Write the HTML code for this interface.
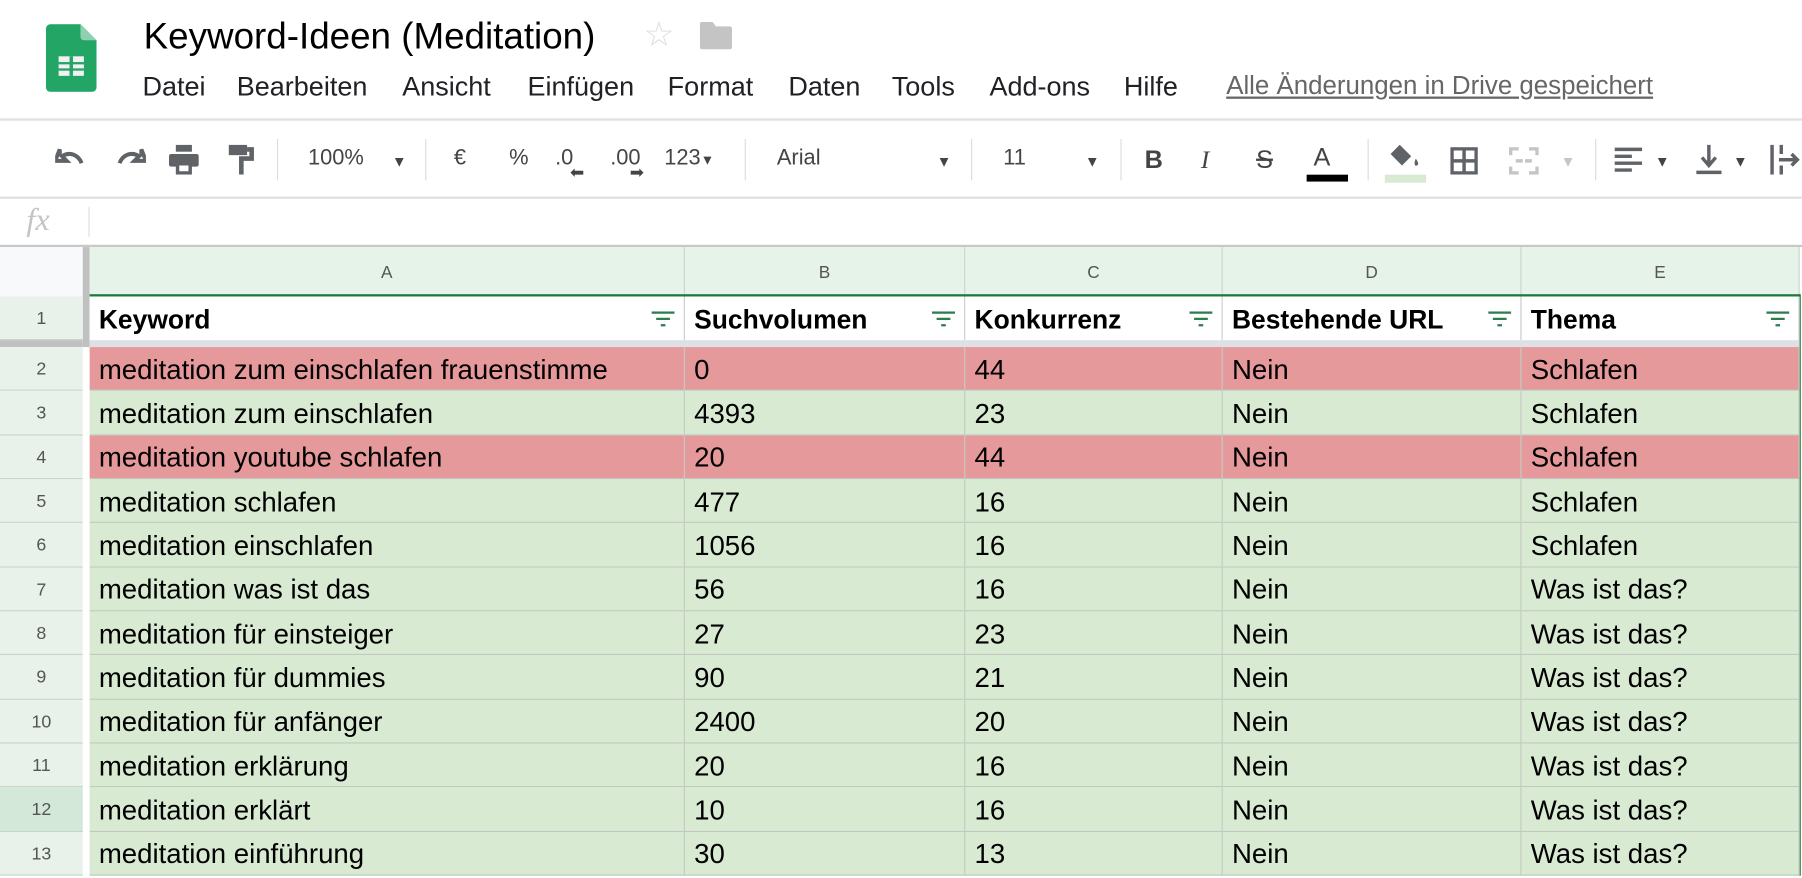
<!DOCTYPE html>
<html><head><meta charset="utf-8">
<style>
html,body{margin:0;padding:0;background:#fff;}
body{width:1802px;height:876px;overflow:hidden;position:relative;font-family:"Liberation Sans",Arial,sans-serif;}
#w{position:absolute;left:0;top:0;width:1568px;height:762px;transform:scale(1.1492);transform-origin:0 0;}
.a{position:absolute;white-space:nowrap;}
.menu{top:62px;font-size:23.5px;color:#202124;}
.tb{top:127px;font-size:19px;color:#444;}
.sep{position:absolute;top:121px;width:1px;height:36px;background:#dadce0;}
.ch{position:absolute;top:215px;height:42px;background:#e6f3e9;border-right:1px solid #c6d4ca;font-size:15px;color:#555;text-align:center;line-height:45px;box-sizing:border-box;}
.rn{position:absolute;left:0;width:72px;font-size:15.5px;color:#555;text-align:center;background:#e8f1ea;border-bottom:1px solid #c6d4ca;box-sizing:border-box;}
.row{position:absolute;left:78px;width:1488px;box-sizing:border-box;border-bottom:1px solid #bfc9c0;}
.c{position:absolute;top:0;height:100%;box-sizing:border-box;border-right:1px solid #c4cbc4;font-size:24px;color:#000;padding-left:8px;padding-top:4px;display:flex;align-items:center;}
.g{background:#d9ead3;}
.r{background:#e6999b;}
.h .c{font-weight:bold;background:#fff;font-size:23px;padding-top:3px;}
.f{position:absolute;right:8px;top:13px;}
</style></head><body><div id="w">
<svg class="a" style="left:40px;top:21px" width="44" height="59" viewBox="0 0 44 59"><path d="M4 0H30L44 14V55a4 4 0 0 1-4 4H4a4 4 0 0 1-4-4V4a4 4 0 0 1 4-4z" fill="#23a566"/><path d="M30 0L44 14H33a3 3 0 0 1-3-3z" fill="#8ed1b1"/><rect x="11" y="28" width="22" height="17" fill="#f1f1f1"/><g fill="#23a566"><rect x="20.5" y="28" width="3" height="17"/><rect x="11" y="33" width="22" height="2"/><rect x="11" y="38.5" width="22" height="2"/></g></svg>
<div class="a" style="left:125px;top:13px;font-size:32px;color:#000">Keyword-Ideen (Meditation)</div>
<div class="a" style="left:560px;top:13px;font-size:30px;color:#ddd">☆</div>
<svg class="a" style="left:609px;top:19px" width="28" height="24" viewBox="0 0 28 24"><path d="M2 0h9l3 4h12a2 2 0 0 1 2 2v16a2 2 0 0 1-2 2H2a2 2 0 0 1-2-2V2a2 2 0 0 1 2-2z" fill="#c4c4c4"/></svg>
<div class="a menu" style="left:124px">Datei</div>
<div class="a menu" style="left:206px">Bearbeiten</div>
<div class="a menu" style="left:350px">Ansicht</div>
<div class="a menu" style="left:459px">Einfügen</div>
<div class="a menu" style="left:581px">Format</div>
<div class="a menu" style="left:686px">Daten</div>
<div class="a menu" style="left:776px">Tools</div>
<div class="a menu" style="left:861px">Add-ons</div>
<div class="a menu" style="left:978px">Hilfe</div>
<div class="a menu" style="left:1067px;color:#666;text-decoration:underline;font-size:22.5px">Alle Änderungen in Drive gespeichert</div>
<div class="a" style="left:0;top:103px;width:1568px;height:2px;background:#e0e0e0"></div>
<svg class="a" style="left:48px;top:128px" width="30" height="22" viewBox="0 0 30 22"><path d="M4 8v-6l-4 10h10l-4-4c6-4 14-2 17 6" fill="none" stroke="#5f6368" stroke-width="3.5"/></svg>
<svg class="a" style="left:97px;top:128px" width="30" height="22" viewBox="0 0 30 22"><path d="M26 8v-6l4 10h-10l4-4c-6-4-14-2-17 6" fill="none" stroke="#5f6368" stroke-width="3.5"/></svg>
<svg class="a" style="left:147px;top:126px" width="26" height="26" viewBox="0 0 26 26"><rect x="6" y="0" width="14" height="6" fill="#5f6368"/><rect x="0" y="8" width="26" height="11" rx="2" fill="#5f6368"/><rect x="6" y="15" width="14" height="11" fill="#5f6368"/><rect x="9" y="18" width="8" height="5" fill="#fff"/></svg>
<svg class="a" style="left:199px;top:126px" width="22" height="26" viewBox="0 0 22 26"><rect x="0" y="0" width="16" height="9" fill="#5f6368"/><path d="M16 4h4v8h-9v14" fill="none" stroke="#5f6368" stroke-width="4"/></svg>
<div class="sep" style="left:241px"></div>
<div class="a tb" style="left:268px">100%</div>
<div class="a tb" style="left:341px;font-size:13px;top:133px">▼</div>
<div class="sep" style="left:370px"></div>
<div class="a tb" style="left:395px">€</div>
<div class="a tb" style="left:443px">%</div>
<div class="a tb" style="left:483px">.0</div>
<div class="a tb" style="left:496px;top:141px;font-size:15px">⬅</div>
<div class="a tb" style="left:531px">.00</div>
<div class="a tb" style="left:548px;top:141px;font-size:15px">➡</div>
<div class="a tb" style="left:578px">123<span style="font-size:12px">▼</span></div>
<div class="sep" style="left:648px"></div>
<div class="a tb" style="left:676px">Arial</div>
<div class="a tb" style="left:815px;font-size:13px;top:133px">▼</div>
<div class="sep" style="left:845px"></div>
<div class="a tb" style="left:873px">11</div>
<div class="a tb" style="left:944px;font-size:13px;top:133px">▼</div>
<div class="sep" style="left:975px"></div>
<div class="a tb" style="left:996px;font-weight:bold;font-size:22px;top:126px">B</div>
<div class="a tb" style="left:1045px;font-style:italic;font-size:22px;top:126px;font-family:'Liberation Serif',serif">I</div>
<div class="a tb" style="left:1093px;text-decoration:line-through;font-size:22px;top:126px">S</div>
<div class="a tb" style="left:1143px;font-size:22px;top:124px">A</div>
<div class="a" style="left:1137px;top:152px;width:36px;height:6px;background:#000"></div>
<div class="sep" style="left:1190px"></div>
<svg class="a" style="left:1208px;top:126px" width="28" height="22" viewBox="0 0 28 22"><path d="M10 0l10 10-8 8-10-10z" fill="#5f6368"/><path d="M24 12c2 3 3 5 1 6s-3-2-1-6z" fill="#5f6368"/></svg>
<div class="a" style="left:1205px;top:152px;width:36px;height:7px;background:#d9ead3"></div>
<svg class="a" style="left:1262px;top:128px" width="24" height="24" viewBox="0 0 24 24"><path d="M1.5 1.5h21v21h-21zM12 1.5v21M1.5 12h21" fill="none" stroke="#5f6368" stroke-width="3"/></svg>
<svg class="a" style="left:1313px;top:128px" width="26" height="24" viewBox="0 0 26 24"><path d="M1.5 7V1.5h7M17.5 1.5h7V7M24.5 17v5.5h-7M8.5 22.5h-7V17M6 12h6M14 12h6" fill="none" stroke="#c5c5c5" stroke-width="3"/></svg>
<div class="a tb" style="left:1358px;font-size:13px;top:133px;color:#c5c5c5">▼</div>
<div class="sep" style="left:1388px"></div>
<svg class="a" style="left:1405px;top:128px" width="24" height="22" viewBox="0 0 24 22"><path d="M0 2h24M0 8h15M0 14h24M0 20h15" stroke="#5f6368" stroke-width="3"/></svg>
<div class="a tb" style="left:1440px;font-size:13px;top:133px">▼</div>
<svg class="a" style="left:1476px;top:126px" width="22" height="26" viewBox="0 0 22 26"><path d="M11 0v16M5 11l6 7 6-7M0 24h22" fill="none" stroke="#5f6368" stroke-width="3"/></svg>
<div class="a tb" style="left:1508px;font-size:13px;top:133px">▼</div>
<svg class="a" style="left:1540px;top:126px" width="28" height="26" viewBox="0 0 28 26"><path d="M2 0v26M8 13h16M19 8l5 5-5 5M10 0v8M10 18v8" fill="none" stroke="#5f6368" stroke-width="3"/></svg>
<div class="a" style="left:0;top:171px;width:1568px;height:2px;background:#e0e0e0"></div>
<div class="a" style="left:23px;top:176px;font-size:28px;font-style:italic;color:#c4c4c4;font-family:'Liberation Serif',serif">fx</div>
<div class="a" style="left:77px;top:180px;width:1px;height:26px;background:#ddd"></div>
<div class="a" style="left:0;top:213px;width:1568px;height:2px;background:#c8c8c8"></div>
<div class="a" style="left:0;top:215px;width:72px;height:43px;background:#f8f9fa"></div>
<div class="a" style="left:72px;top:215px;width:6px;height:87px;background:#c0c0c0"></div>
<div class="ch" style="left:78px;width:518px">A</div>
<div class="ch" style="left:596px;width:244px">B</div>
<div class="ch" style="left:840px;width:224px">C</div>
<div class="ch" style="left:1064px;width:260px">D</div>
<div class="ch" style="left:1324px;width:242px">E</div>
<div class="a" style="left:78px;top:256px;width:1488px;height:2px;background:#1e7a3c"></div>
<div class="a" style="left:1565px;top:256px;width:2px;height:506px;background:#1e7a3c"></div>
<div class="rn" style="top:258px;height:38px;line-height:40px">1</div>
<div class="row h" style="top:258px;height:38px;border-bottom:none">
<div class="c" style="left:0;width:518px">Keyword<svg class="f" width="20" height="14" viewBox="0 0 20 14"><path d="M0 1h20M4 6.5h12M8 12h4" stroke="#2e7d4f" stroke-width="2"/></svg></div>
<div class="c" style="left:518px;width:244px">Suchvolumen<svg class="f" width="20" height="14" viewBox="0 0 20 14"><path d="M0 1h20M4 6.5h12M8 12h4" stroke="#2e7d4f" stroke-width="2"/></svg></div>
<div class="c" style="left:762px;width:224px">Konkurrenz<svg class="f" width="20" height="14" viewBox="0 0 20 14"><path d="M0 1h20M4 6.5h12M8 12h4" stroke="#2e7d4f" stroke-width="2"/></svg></div>
<div class="c" style="left:986px;width:260px">Bestehende URL<svg class="f" width="20" height="14" viewBox="0 0 20 14"><path d="M0 1h20M4 6.5h12M8 12h4" stroke="#2e7d4f" stroke-width="2"/></svg></div>
<div class="c" style="left:1246px;width:242px">Thema<svg class="f" width="20" height="14" viewBox="0 0 20 14"><path d="M0 1h20M4 6.5h12M8 12h4" stroke="#2e7d4f" stroke-width="2"/></svg></div>
</div>
<div class="a" style="left:0;top:296px;width:72px;height:6px;background:#c0c0c0"></div>
<div class="a" style="left:78px;top:296px;width:1488px;height:6px;background:#dde1e6"></div>
<div id="rows"></div>
</div>
<script>
var d=[
["meditation zum einschlafen frauenstimme","0","44","Nein","Schlafen","r"],
["meditation zum einschlafen","4393","23","Nein","Schlafen","g"],
["meditation youtube schlafen","20","44","Nein","Schlafen","r"],
["meditation schlafen","477","16","Nein","Schlafen","g"],
["meditation einschlafen","1056","16","Nein","Schlafen","g"],
["meditation was ist das","56","16","Nein","Was ist das?","g"],
["meditation für einsteiger","27","23","Nein","Was ist das?","g"],
["meditation für dummies","90","21","Nein","Was ist das?","g"],
["meditation für anfänger","2400","20","Nein","Was ist das?","g"],
["meditation erklärung","20","16","Nein","Was ist das?","g"],
["meditation erklärt","10","16","Nein","Was ist das?","g"],
["meditation einführung","30","13","Nein","Was ist das?","g"]];
var L=[0,518,762,986,1246],W=[518,244,224,260,242],h="";
d.forEach(function(r,i){var t=(302+i*38.33).toFixed(2);
h+='<div class="rn" style="top:'+t+'px;height:38.33px;line-height:40px;'+(i==10?'background:#d4e8d9;':'')+'">'+(i+2)+'</div>';
h+='<div class="row '+r[5]+'" style="top:'+t+'px;height:38.33px">';
for(var k=0;k<5;k++)h+='<div class="c" style="left:'+L[k]+'px;width:'+W[k]+'px">'+r[k]+'</div>';
h+='</div>';});
document.getElementById('rows').outerHTML=h;
</script>
</body></html>
